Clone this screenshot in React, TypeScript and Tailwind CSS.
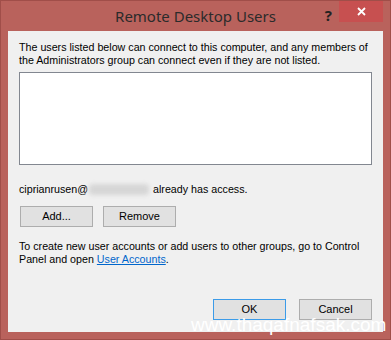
import React from "react";

const WinButton = ({ label, primary }: { label: string; primary?: boolean }) => (
  <button
    className={
      "h-[21px] w-[73px] bg-[#e1e1e1] text-[11px] leading-none text-black " +
      (primary ? "border border-[#3c9be8]" : "border border-[#adadad]")
    }
  >
    {label}
  </button>
);

export default function App() {
  return (
    <div
      className="relative flex h-[340px] w-[391px] flex-col overflow-hidden border border-[#a04e49] bg-[#b9625c]"
      style={{ fontFamily: '"Liberation Sans", Arial, sans-serif' }}
    >
      {/* title bar */}
      <div className="relative flex h-[30px] shrink-0 items-start">
        <div
          className="absolute left-0 right-0 top-[4px] text-center text-[15px] text-[#2b2b2b]"
          style={{ fontFamily: '"Noto Sans", sans-serif' }}
        >
          Remote Desktop Users
        </div>
        <div className="ml-auto flex items-start">
          <span
            className="mr-[7px] mt-[3px] text-[15px] font-bold text-[#222]"
            style={{ fontFamily: '"Noto Sans", sans-serif' }}
          >
            ?
          </span>
          <div className="mr-[7px] flex h-[21px] w-[44px] items-center justify-center bg-[#c75050]">
            <svg width="9" height="9" viewBox="0 0 9 9">
              <path d="M1 1 L8 8 M8 1 L1 8" stroke="white" strokeWidth="1.8" />
            </svg>
          </div>
        </div>
      </div>

      {/* client area */}
      <div className="mx-[7px] mb-[7px] flex flex-1 flex-col bg-[#f0f0f0] px-[11px] pb-[12px] pt-[10px] text-[10.7px] leading-[13px] text-black">
        <p>
          The users listed below can connect to this computer, and any members of
          the Administrators group can connect even if they are not listed.
        </p>
        <div className="mt-[5px] h-[93px] border border-[#828790] bg-white" />
        <p className="mt-[18px] flex items-center">
          ciprianrusen@
          <span className="mx-[1px] inline-block h-[11px] w-[60px] rounded-sm bg-[#d6d6d6] blur-[2px]" />
          &nbsp;already has access.
        </p>
        <div className="ml-[1px] mt-[10px] flex gap-[10px]">
          <WinButton label="Add..." />
          <WinButton label="Remove" />
        </div>
        <p className="mt-[13px]">
          To create new user accounts or add users to other groups, go to Control
          Panel and open <span className="text-[#0066cc] underline">User Accounts</span>.
        </p>
        <div className="mt-auto flex justify-end gap-[13px]">
          <WinButton label="OK" primary />
          <WinButton label="Cancel" />
        </div>
      </div>

      {/* watermark */}
      <div className="absolute left-[190px] top-[314px] text-[19px] leading-none text-white">
        www.thaqafnafsak.com
      </div>
    </div>
  );
}
